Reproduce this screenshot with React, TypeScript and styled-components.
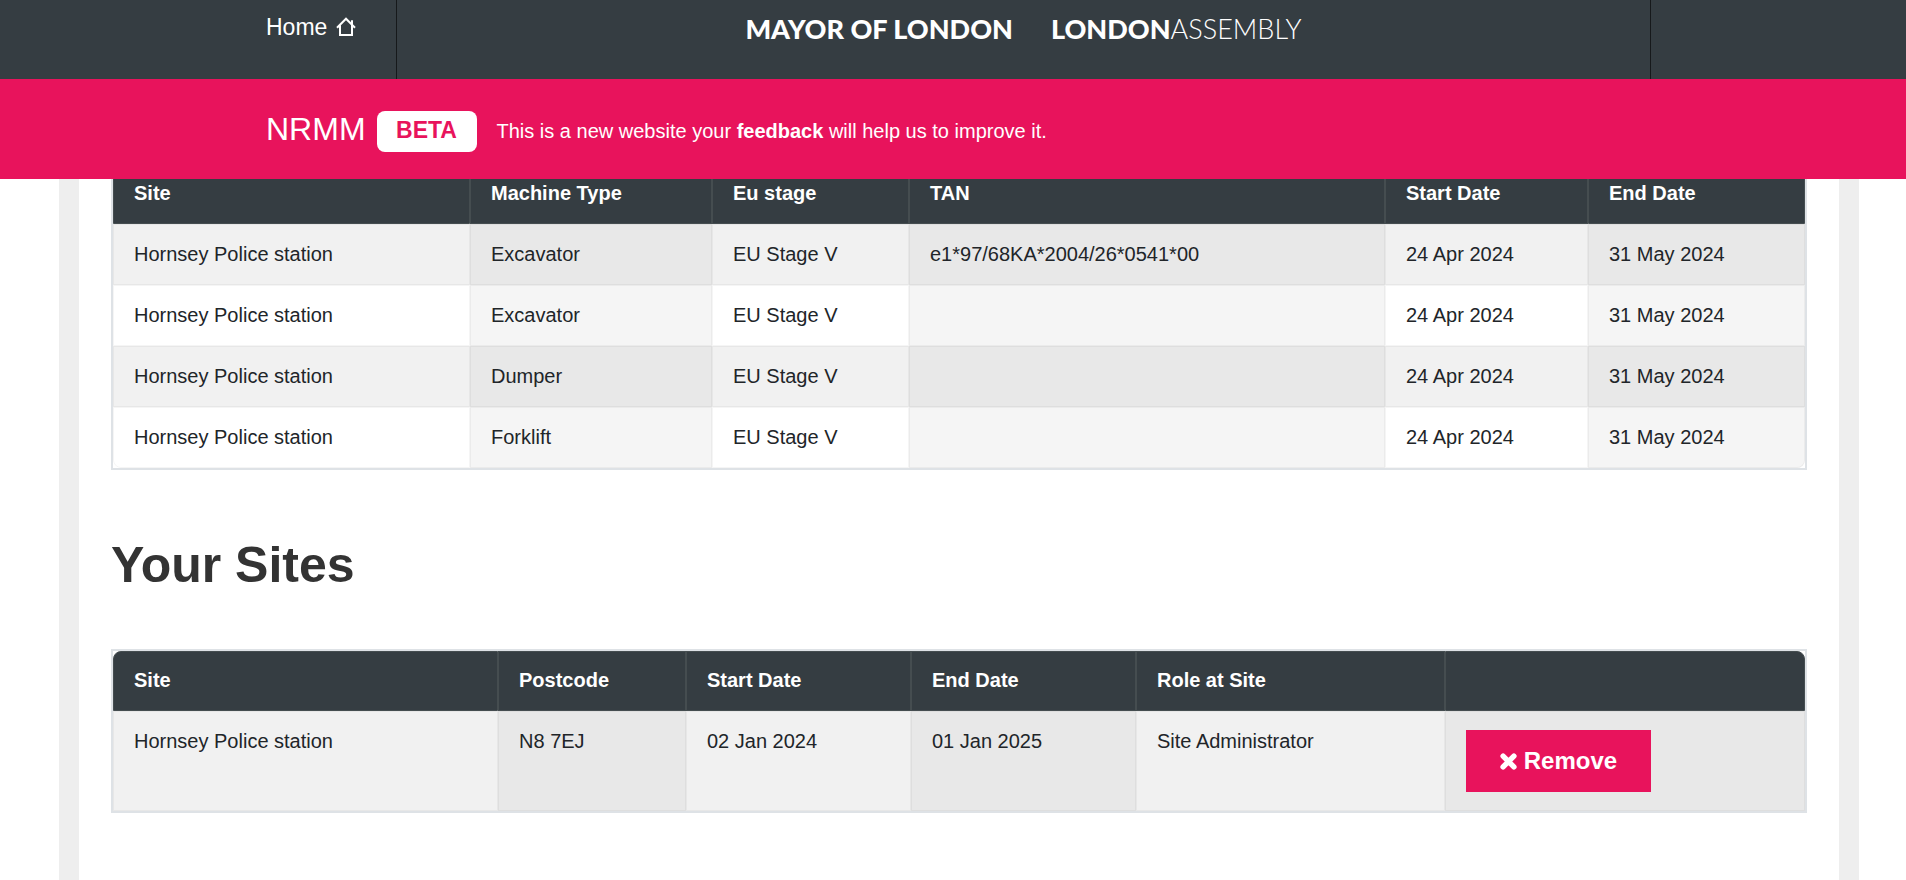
import React from "react";
import styled, { createGlobalStyle, css } from "styled-components";

const GlobalStyle = createGlobalStyle`
  *, *::before, *::after { box-sizing: border-box; }
  body {
    margin: 0;
    background: #fff;
    color: #212529;
    font-family: "Liberation Sans", Arial, Helvetica, sans-serif;
    font-size: 20px;
    line-height: 23px;
  }
`;

const SiteHeader = styled.header`
  position: fixed;
  top: 0;
  left: 0;
  right: 0;
  z-index: 10;
`;

const TopBar = styled.div`
  display: flex;
  height: 79px;
  background: #353d42;
  color: #fff;
`;

const HomeNav = styled.nav`
  flex: 0 0 397px;
  padding: 12px 0 0 266px;
  border-right: 1px solid #16191b;
`;

const HomeLink = styled.a`
  display: flex;
  align-items: center;
  gap: 9px;
  height: 30px;
  color: inherit;
  font-size: 23px;
  text-decoration: none;
`;

const Logos = styled.div`
  flex: 1;
  display: flex;
  justify-content: center;
  gap: 38px;
  padding-top: 12px;
`;

const LogoLink = styled.a`
  height: 34px;
  color: inherit;
  font-family: Lato, sans-serif;
  font-size: 27px;
  font-weight: 900;
  line-height: 34px;
  text-decoration: none;
  white-space: nowrap;
`;

const LogoLight = styled.span`
  font-weight: 300;
`;

const BarEnd = styled.div`
  flex: 0 0 256px;
  border-left: 1px solid #16191b;
`;

const PhaseBar = styled.div`
  display: flex;
  align-items: center;
  height: 100px;
  padding: 4px 24px 0 266px;
  background: #e8135c;
  color: #fff;
`;

const ServiceName = styled.a`
  margin-right: 11px;
  padding-bottom: 4px;
  color: inherit;
  font-size: 32px;
  line-height: 40px;
  text-decoration: none;
`;

const BetaBadge = styled.strong`
  width: 100px;
  height: 41px;
  margin-right: 20px;
  border-radius: 8px;
  background: #fff;
  color: #e8135c;
  font-size: 23px;
  line-height: 38px;
  text-align: center;
`;

const PhaseText = styled.p`
  margin: 0;
`;

const FeedbackLink = styled.a`
  color: inherit;
  font-weight: 700;
  text-decoration: none;
`;

const Main = styled.main`
  min-height: 100vh;
  margin: 0 47px 0 59px;
  padding: 162px 32px 0;
  border: solid #eee;
  border-width: 0 20px;
`;

const Heading = styled.h1`
  margin: 65px 0 54px;
  color: #333;
  font-size: 50px;
  line-height: 60px;
`;

const Table = styled.table<{ $rounded?: boolean }>`
  width: 100%;
  table-layout: fixed;
  border: 2px solid #dee2e6;
  border-collapse: separate;
  border-spacing: 0;

  th:first-child { border-top-left-radius: 8px; }
  th:last-child { border-top-right-radius: 8px; }
  ${(p) =>
    p.$rounded &&
    css`
      tr:last-child td:first-child { border-bottom-left-radius: 8px; }
      tr:last-child td:last-child { border-bottom-right-radius: 8px; }
    `}
`;

const Col = styled.col<{ $share: number }>`
  width: ${(p) => p.$share}%;
`;

const HeadCell = styled.th`
  height: 60px;
  padding: 17px 20px 19px;
  border: 1px solid #454d50;
  background: #353d42;
  color: #fff;
  font-weight: 700;
  line-height: 22px;
  text-align: left;
`;

const Row = styled.tr`
  background: #fff;
  &:nth-child(odd) { background: #f1f1f1; }
  td:nth-child(even) { background: #f5f5f5; }
  &:nth-child(odd) td:nth-child(even) { background: #e8e8e8; }
`;

const Cell = styled.td`
  padding: 18px 20px;
  border: 1px solid rgba(0, 0, 0, 0.04);
  vertical-align: top;
`;

const RemoveButton = styled.button`
  display: flex;
  align-items: center;
  justify-content: center;
  gap: 7px;
  width: 185px;
  height: 62px;
  padding: 0;
  border: 0;
  background: #e8135c;
  color: #fff;
  font-family: inherit;
  font-size: 24px;
  font-weight: 700;
  cursor: pointer;
`;

const HomeIcon = () => (
  <svg width="20" height="20" viewBox="0 0 20 20" fill="none" stroke="#fff" strokeWidth="2" aria-hidden="true">
    <path d="M1 10.7 10 1.7l9 9M4 8.5V18h12V3.2" />
  </svg>
);

const CrossIcon = () => (
  <svg width="17" height="17" viewBox="0 0 17 17" stroke="#fff" strokeWidth="5.4" strokeLinecap="round" aria-hidden="true">
    <path d="M3.1 3.1 13.9 13.9M13.9 3.1 3.1 13.9" />
  </svg>
);

type Column = { label: string; size: number };

const machineColumns: Column[] = [
  { label: "Site", size: 357 },
  { label: "Machine Type", size: 242 },
  { label: "Eu stage", size: 197 },
  { label: "TAN", size: 476 },
  { label: "Start Date", size: 203 },
  { label: "End Date", size: 217 },
];

const machines = [
  ["Hornsey Police station", "Excavator", "EU Stage V", "e1*97/68KA*2004/26*0541*00", "24 Apr 2024", "31 May 2024"],
  ["Hornsey Police station", "Excavator", "EU Stage V", "", "24 Apr 2024", "31 May 2024"],
  ["Hornsey Police station", "Dumper", "EU Stage V", "", "24 Apr 2024", "31 May 2024"],
  ["Hornsey Police station", "Forklift", "EU Stage V", "", "24 Apr 2024", "31 May 2024"],
];

const siteColumns: Column[] = [
  { label: "Site", size: 385 },
  { label: "Postcode", size: 188 },
  { label: "Start Date", size: 225 },
  { label: "End Date", size: 225 },
  { label: "Role at Site", size: 309 },
  { label: "", size: 360 },
];

const sites: React.ReactNode[][] = [
  [
    "Hornsey Police station",
    "N8 7EJ",
    "02 Jan 2024",
    "01 Jan 2025",
    "Site Administrator",
    <RemoveButton type="button">
      <CrossIcon />
      Remove
    </RemoveButton>,
  ],
];

function DataTable({ columns, rows, rounded }: { columns: Column[]; rows: React.ReactNode[][]; rounded?: boolean }) {
  const total = columns.reduce((sum, c) => sum + c.size, 0);
  return (
    <Table $rounded={rounded}>
      <colgroup>
        {columns.map((c, i) => (
          <Col key={i} $share={(c.size / total) * 100} />
        ))}
      </colgroup>
      <thead>
        <tr>
          {columns.map((c, i) => (
            <HeadCell key={i} scope="col">{c.label}</HeadCell>
          ))}
        </tr>
      </thead>
      <tbody>
        {rows.map((row, r) => (
          <Row key={r}>
            {row.map((value, i) => (
              <Cell key={i}>{value}</Cell>
            ))}
          </Row>
        ))}
      </tbody>
    </Table>
  );
}

export default function App() {
  return (
    <>
      <GlobalStyle />
      <SiteHeader>
        <TopBar>
          <HomeNav>
            <HomeLink href="#home">
              Home
              <HomeIcon />
            </HomeLink>
          </HomeNav>
          <Logos>
            <LogoLink href="#mayor">MAYOR OF LONDON</LogoLink>
            <LogoLink href="#assembly">
              LONDON<LogoLight>ASSEMBLY</LogoLight>
            </LogoLink>
          </Logos>
          <BarEnd />
        </TopBar>
        <PhaseBar>
          <ServiceName href="#nrmm">NRMM</ServiceName>
          <BetaBadge>BETA</BetaBadge>
          <PhaseText>
            This is a new website your <FeedbackLink href="#feedback">feedback</FeedbackLink> will help us to improve it.
          </PhaseText>
        </PhaseBar>
      </SiteHeader>
      <Main>
        <DataTable columns={machineColumns} rows={machines} rounded />
        <Heading>Your Sites</Heading>
        <DataTable columns={siteColumns} rows={sites} />
      </Main>
    </>
  );
}
